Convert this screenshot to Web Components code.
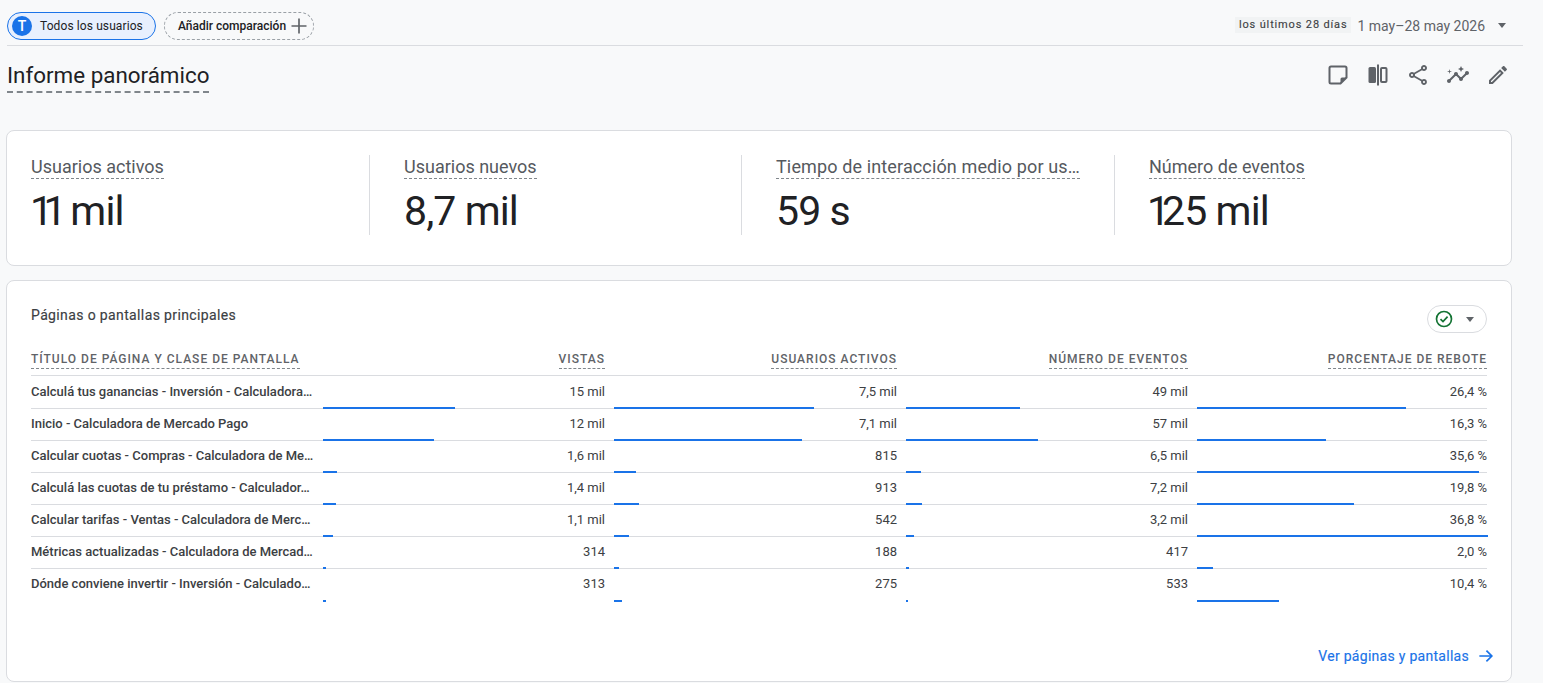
<!DOCTYPE html>
<html lang="es">
<head>
<meta charset="utf-8">
<title>Informe panorámico</title>
<style>
html,body{margin:0;padding:0;height:683px;overflow:hidden;background:#f8f9fa;font-family:Roboto,Arial,sans-serif;color:#202124}
</style>
</head>
<body>
<ga-page></ga-page>
<script>
const G='#5f6368';
const ICONS={
 note:`<path d="M5 3.500h14a1.500 1.500 0 0 1 1.500 1.500v9.500l-6 6H5A1.500 1.500 0 0 1 3.500 19V5A1.500 1.500 0 0 1 5 3.500z" fill="none" stroke="${G}" stroke-width="2"/><path d="M14.500 20.500v-4.500a1.500 1.500 0 0 1 1.500-1.500h4.500z" fill="${G}"/>`,
 compare:`<rect x="2.500" y="4" width="7.500" height="16" rx="1.500" fill="${G}"/><rect x="11" y="1.500" width="2" height="21" fill="${G}"/><rect x="15" y="5" width="5.500" height="14" rx="1" fill="none" stroke="${G}" stroke-width="2"/>`,
 share:`<path fill="${G}" d="M18 16.080c-.76 0-1.440.3-1.960.77L8.910 12.700c.05-.23.09-.46.09-.7s-.04-.47-.09-.7l7.050-4.110c.54.5 1.250.81 2.040.81 1.660 0 3-1.340 3-3s-1.340-3-3-3-3 1.340-3 3c0 .24.04.47.09.7L8.040 9.810C7.500 9.310 6.790 9 6 9c-1.660 0-3 1.340-3 3s1.340 3 3 3c.79 0 1.500-.31 2.040-.81l7.120 4.160c-.05.21-.08.43-.08.65 0 1.610 1.310 2.920 2.920 2.920s2.920-1.310 2.920-2.920-1.310-2.920-2.920-2.920zM18 4c.55 0 1 .45 1 1s-.45 1-1 1-1-.45-1-1 .45-1 1-1zM6 13c-.55 0-1-.45-1-1s.45-1 1-1 1 .45 1 1-.45 1-1 1zm12 7.020c-.55 0-1-.45-1-1s.45-1 1-1 1 .45 1 1-.45 1-1 1z"/>`,
 insights:`<g fill="${G}"><path d="M21 8c-1.450 0-2.260 1.440-1.930 2.510l-3.550 3.560c-.3-.09-.74-.09-1.040 0l-2.550-2.550C12.270 10.450 11.460 9 10 9c-1.450 0-2.270 1.440-1.930 2.520l-4.560 4.550C2.440 15.740 1 16.550 1 18c0 1.100.9 2 2 2 1.450 0 2.260-1.440 1.930-2.510l4.550-4.560c.3.09.74.09 1.040 0l2.550 2.550C12.730 16.550 13.540 18 15 18c1.450 0 2.270-1.440 1.930-2.520l3.560-3.550c1.070.33 2.510-.48 2.510-1.930 0-1.100-.9-2-2-2z"/><path d="M15 9l.94-2.070L18 6l-2.060-.93L15 3l-.92 2.070L12 6l2.080.93z"/><path d="M3.500 11L4 9l2-.5L4 8l-.5-2L3 8l-2 .5L3 9z"/></g>`,
 edit:`<path fill="${G}" d="M14.060 9.020l.92.92L5.920 19H5v-.92l9.060-9.060M17.660 3c-.25 0-.51.1-.7.29l-1.830 1.830 3.750 3.750 1.830-1.830c.39-.39.39-1.020 0-1.410l-2.340-2.340c-.2-.2-.45-.29-.71-.29zm-3.600 3.190L3 17.250V21h3.750L17.810 9.940l-3.750-3.750z"/>`,
 plus:`<path d="M12 3v18M3 12h18" stroke="${G}" stroke-width="2" fill="none"/>`,
 arrow:`<path d="M4 12h15M12.500 5.500L19 12l-6.500 6.500" stroke="#1a73e8" stroke-width="2" fill="none"/>`
};

class GaIcon extends HTMLElement{
 connectedCallback(){
  if(this.shadowRoot)return;
  const s=this.getAttribute('size')||24;
  this.attachShadow({mode:'open'}).innerHTML=`<style>:host{display:inline-flex;width:${s}px;height:${s}px;flex:none}svg{display:block;width:100%;height:100%}</style><svg viewBox="0 0 24 24">${ICONS[this.getAttribute('name')]}</svg>`;
 }
}
customElements.define('ga-icon',GaIcon);

class GaTopbar extends HTMLElement{
 constructor(){
  super();
  this.attachShadow({mode:'open'}).innerHTML=`<style>
  :host{display:flex;align-items:flex-start;height:46px;margin-left:7px;width:1516px;box-sizing:border-box;border-bottom:1px solid #dadce0}
  .wrap{display:flex;align-items:center;gap:8px;flex:1;margin-top:12px;height:28px}
  .chip{display:flex;align-items:center;box-sizing:border-box;height:28px;border-radius:14px;font:400 12px Roboto,sans-serif;color:#202124}
  .user{width:149px;background:#e8f0fe;border:1px solid #1a73e8;padding-left:4px;letter-spacing:.1px}
  .av{width:20px;height:20px;border-radius:50%;background:#1a73e8;color:#fff;display:flex;align-items:center;justify-content:center;font:500 14px Roboto,sans-serif;margin-right:8px}
  .add{width:150px;border:1px dashed #9aa0a6;padding-left:13px;font-weight:500;color:#202124}
  .add ga-icon{margin-left:3px}
  .date{display:flex;align-items:flex-start;margin:17px 17px 0 0;height:18px;font:400 14px/18px Roboto,sans-serif;color:#5f6368}
  .tag{background:#f1f3f4;font:400 11px/15px Roboto,sans-serif;letter-spacing:.85px;-webkit-text-stroke:.12px #3c4043;color:#3c4043;padding:0 4px;height:16px;margin-right:6px}
  .caret{width:0;height:0;border:4.500px solid transparent;border-top:5px solid #5f6368;border-bottom:0;margin:6px 0 0 13px}
  </style>
  <div class="wrap">
   <div class="chip user"><span class="av">T</span>Todos los usuarios</div>
   <div class="chip add">Añadir comparación<ga-icon name="plus" size="20"></ga-icon></div>
  </div>
  <div class="date"><span class="tag">los últimos 28 días</span>1 may–28 may 2026<span class="caret"></span></div>`;
 }
}
customElements.define('ga-topbar',GaTopbar);

class GaTitle extends HTMLElement{
 constructor(){
  super();
  this.attachShadow({mode:'open'}).innerHTML=`<style>
  :host{display:flex;justify-content:space-between;align-items:flex-start;margin-left:7px;width:1505px;height:84px}
  h1{margin:15px 0 0;font:400 22.400px/29px Roboto,sans-serif;color:#202124;border-bottom:2px dashed #80868b;height:30px}
  .tools{display:flex;gap:16px;margin:17px 2px 0 0}
  </style>
  <h1>Informe panorámico</h1>
  <div class="tools">
   <ga-icon name="note"></ga-icon><ga-icon name="compare"></ga-icon><ga-icon name="share"></ga-icon><ga-icon name="insights"></ga-icon><ga-icon name="edit"></ga-icon>
  </div>`;
 }
}
customElements.define('ga-title',GaTitle);

class GaMetric extends HTMLElement{
 constructor(){
  super();
  this.attachShadow({mode:'open'}).innerHTML=`<style>
  :host{display:block;box-sizing:border-box;height:80px;padding-left:34px;border-left:1px solid #dadce0;min-width:0}
  :host([first]){border-left:0;padding-left:0}
  .row{display:flex}
  .l{white-space:nowrap;font:400 18px/23px Roboto,sans-serif;color:#55595e;border-bottom:1px dashed #80868b;height:23px}
  .v{font:400 41px/44px Roboto,sans-serif;letter-spacing:-.9px;color:#202124;margin-top:10px}
  </style><div class="row"><span class="l"><slot name="label"></slot></span></div><div class="v"><slot name="value"></slot></div>`;
 }
}
customElements.define('ga-metric',GaMetric);

class GaCard extends HTMLElement{
 constructor(){
  super();
  this.attachShadow({mode:'open'}).innerHTML=`<style>
  :host{display:block;box-sizing:border-box;margin-left:6px;width:1506px;background:#fff;border:1px solid #dadce0;border-radius:8px}
  </style><slot></slot>`;
 }
}
customElements.define('ga-card',GaCard);

class GaMetrics extends HTMLElement{
 constructor(){
  super();
  this.attachShadow({mode:'open'}).innerHTML=`<style>
  :host{display:grid;grid-template-columns:338px 372px 373px 1fr;height:134px;box-sizing:border-box;padding:24px 24px 0}
  </style><slot></slot>`;
 }
}
customElements.define('ga-metrics',GaMetrics);

class GaCell extends HTMLElement{
 constructor(){
  super();
  this.attachShadow({mode:'open'}).innerHTML=`<style>
  :host{display:block;position:relative;box-sizing:border-box;height:100%;text-align:right;font:400 13px/var(--lh,30px) Roboto,sans-serif;color:#3c4043;padding-right:9px}
  :host([last]){padding-right:0}
  :host([name]){text-align:left;font-weight:500;padding-right:0;white-space:nowrap}
  .bar{position:absolute;left:0;bottom:-1px;height:2px;background:#1a73e8}
  </style><slot></slot><div class="bar"></div>`;
 }
 connectedCallback(){
  const b=this.getAttribute('bar');
  const bar=this.shadowRoot.querySelector('.bar');
  if(b)bar.style.width=b+'px';else bar.remove();
 }
}
customElements.define('ga-cell',GaCell);

class GaRow extends HTMLElement{
 constructor(){
  super();
  this.attachShadow({mode:'open'}).innerHTML=`<style>
  :host{display:grid;grid-template-columns:292px 291px 292px 291px 290px;height:32px;box-sizing:border-box;border-bottom:1px solid #dadce0;--lh:30px}
  :host([head]){height:25px}
  :host([top]){height:33px;--lh:31px}
  :host([end]){border-bottom:0}
  </style><slot></slot>`;
 }
}
customElements.define('ga-row',GaRow);

class GaHead extends HTMLElement{
 constructor(){
  super();
  this.attachShadow({mode:'open'}).innerHTML=`<style>
  :host{display:flex;justify-content:flex-end;align-items:flex-start;padding-right:9px;box-sizing:border-box}
  :host([first]){justify-content:flex-start}
  :host([last]){padding-right:0}
  span{font:500 12px/17px Roboto,sans-serif;letter-spacing:1px;color:#5f6368;border-bottom:1px dashed #80868b;height:17px;white-space:nowrap}
  </style><span><slot></slot></span>`;
 }
}
customElements.define('ga-head',GaHead);

class GaTableCard extends HTMLElement{
 constructor(){
  super();
  this.attachShadow({mode:'open'}).innerHTML=`<style>
  :host{display:block;box-sizing:border-box;padding:24px 24px 0;height:400px}
  .top{display:flex;justify-content:space-between;align-items:flex-start;height:46px}
  h2{margin:0;font:400 14px/20px Roboto,sans-serif;color:#3c4043;letter-spacing:.37px;-webkit-text-stroke:.15px #3c4043}
  .status{display:flex;align-items:center;box-sizing:border-box;width:60px;height:28px;border:1px solid #dadce0;border-radius:14px;padding-left:6px}
  .c{width:0;height:0;border:4.500px solid transparent;border-top:5px solid #5f6368;border-bottom:0;margin-left:12px}
  svg{width:20px;height:20px;display:block}
  .more{display:flex;justify-content:flex-end;align-items:center;font:400 14px/20px Roboto,sans-serif;letter-spacing:.28px;-webkit-text-stroke:.15px #1a73e8;color:#1a73e8;gap:7px;margin-top:45px;margin-right:-9px}
  </style>
  <div class="top"><h2>Páginas o pantallas principales</h2>
   <div class="status"><svg viewBox="0 0 24 24"><circle cx="12" cy="12" r="9" fill="none" stroke="#137333" stroke-width="2"/><path d="M7.800 12.200l3 3 5.500-6" fill="none" stroke="#137333" stroke-width="2"/></svg><span class="c"></span></div>
  </div>
  <slot></slot>
  <div class="more">Ver páginas y pantallas<ga-icon name="arrow" size="20"></ga-icon></div>`;
 }
}
customElements.define('ga-table-card',GaTableCard);

const ROWS=[
 ['Calculá tus ganancias - Inversión - Calculadora…','15 mil',132,'7,5 mil',200,'49 mil',114,'26,4 %',209],
 ['Inicio - Calculadora de Mercado Pago','12 mil',111,'7,1 mil',188,'57 mil',132,'16,3 %',129],
 ['Calcular cuotas - Compras - Calculadora de Me…','1,6 mil',14,'815',22,'6,5 mil',15,'35,6 %',282],
 ['Calculá las cuotas de tu préstamo - Calculador…','1,4 mil',13,'913',25,'7,2 mil',16,'19,8 %',157],
 ['Calcular tarifas - Ventas - Calculadora de Merc…','1,1 mil',10,'542',15,'3,2 mil',8,'36,8 %',291],
 ['Métricas actualizadas - Calculadora de Mercad…','314',3,'188',5,'417',3,'2,0 %',16],
 ['Dónde conviene invertir - Inversión - Calculado…','313',3,'275',8,'533',2,'10,4 %',82]
];

class GaPage extends HTMLElement{
 constructor(){
  super();
  const rows=ROWS.map((r,i)=>`<ga-row${i==0?' top':''}${i==ROWS.length-1?' end':''}><ga-cell name>${r[0]}</ga-cell><ga-cell bar="${r[2]}">${r[1]}</ga-cell><ga-cell bar="${r[4]}">${r[3]}</ga-cell><ga-cell bar="${r[6]}">${r[5]}</ga-cell><ga-cell last bar="${r[8]}">${r[7]}</ga-cell></ga-row>`).join('');
  const m=[['Usuarios activos','<span style="letter-spacing:-9.500px;margin-left:-1px">1</span><span style="letter-spacing:-5.500px">1</span> mil'],['Usuarios nuevos','8,7 mil'],['<span style="letter-spacing:.13px">Tiempo de interacción medio por us…</span>','59 s'],['Número de eventos','<span style="letter-spacing:-8px;margin-left:-2px">1</span>25 mil']];
  this.attachShadow({mode:'open'}).innerHTML=`<style>:host{display:block;width:1543px}ga-card+ga-card{margin-top:14px}</style>
  <ga-topbar></ga-topbar><ga-title></ga-title>
  <ga-card><ga-metrics>${m.map((x,i)=>`<ga-metric${i?'':' first'}><span slot="label">${x[0]}</span><span slot="value">${x[1]}</span></ga-metric>`).join('')}</ga-metrics></ga-card>
  <ga-card><ga-table-card>
   <ga-row head><ga-head first>TÍTULO DE PÁGINA Y CLASE DE PANTALLA</ga-head><ga-head>VISTAS</ga-head><ga-head>USUARIOS ACTIVOS</ga-head><ga-head>NÚMERO DE EVENTOS</ga-head><ga-head last>PORCENTAJE DE REBOTE</ga-head></ga-row>
   ${rows}
  </ga-table-card></ga-card>`;
 }
}
customElements.define('ga-page',GaPage);
</script>
</body>
</html>
